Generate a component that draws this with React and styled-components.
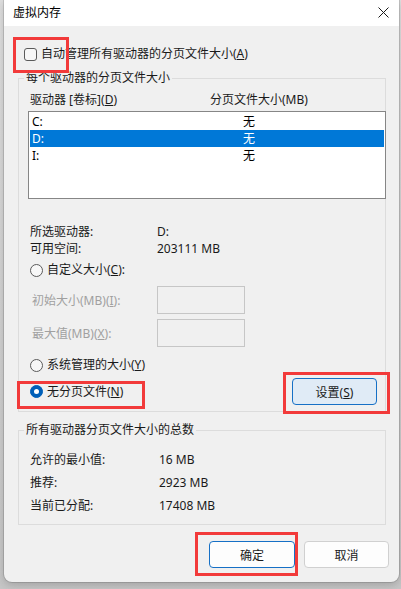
import React from 'react'
import styled, { createGlobalStyle } from 'styled-components'

const GlobalStyle = createGlobalStyle`
  html, body { margin: 0; padding: 0; }
  body {
    background: #d2d2d2;
    font-family: "Noto Sans", "Noto Sans CJK SC", "Microsoft YaHei UI", sans-serif;
    font-size: 12px;
    color: #1a1a1a;
  }
  * { box-sizing: border-box; }
`

const Page = styled.div`
  position: relative;
  width: 401px;
  height: 589px;
  overflow: hidden;
  background: linear-gradient(#dedede, #c6c6c6);
`

const Window = styled.div`
  margin-left: 4px;
  width: 395px;
  height: 582px;
  background: #f0f0f0;
  border-radius: 0 0 8px 8px;
  box-shadow: 0 0 0 1px rgba(0, 0, 0, 0.12), 0 3px 8px rgba(0, 0, 0, 0.18);
  display: flex;
  flex-direction: column;
`

const TitleBar = styled.div`
  height: 26px;
  flex: none;
  background: #ffffff;
  display: flex;
  align-items: center;
  justify-content: space-between;
  padding: 0 10px 2px 9px;
  color: #000;
`

const Body = styled.div`
  padding: 0 10px 0 14px;
  display: flex;
  flex-direction: column;
`

const CheckRow = styled.label`
  margin: 20px 0 0 6px;
  height: 16px;
  line-height: 16px;
  display: flex;
  align-items: center;
  gap: 4px;
`

const CheckBox = styled.span`
  width: 13px;
  height: 13px;
  border: 1px solid #5a5a5a;
  border-radius: 3px;
  background: #f7f7f7;
  flex: none;
`

const Group = styled.fieldset`
  margin: ${p => p.$top}px 0 0 0;
  padding: 0;
  width: 368px;
  min-width: 0;
  border: 1px solid #dcdcdc;
`

const Legend = styled.legend`
  margin-left: 5px;
  padding: 0 2px;
  height: 16px;
  line-height: 16px;
`

const GroupInner = styled.div`
  display: flex;
  flex-direction: column;
  padding-bottom: ${p => p.$bottom}px;
`

const Header = styled.div`
  margin-top: 6px;
  padding-left: 11px;
  height: 16px;
  line-height: 16px;
  display: flex;
`

const HeaderCol = styled.span`
  width: 180px;
  flex: none;
`

const ListBox = styled.div`
  margin: 3px 0 0 9px;
  width: 358px;
  height: 88px;
  background: #ffffff;
  border: 1px solid #868686;
  padding: 1px;
`

const ListRow = styled.div`
  height: 17px;
  line-height: 17px;
  padding-left: 2px;
  display: flex;
  background: ${p => (p.$selected ? '#0078d7' : 'transparent')};
  color: ${p => (p.$selected ? '#ffffff' : '#000000')};
`

const DriveCol = styled.span`
  width: 211px;
  flex: none;
`

const InfoRow = styled.div`
  margin-top: ${p => p.$top}px;
  padding-left: 11px;
  height: 16px;
  line-height: 16px;
  display: flex;
`

const InfoLabel = styled.span`
  width: ${p => p.$width}px;
  flex: none;
`

const RadioRow = styled.div`
  margin-top: ${p => p.$top}px;
  padding: 0 8px 0 11px;
  height: ${p => p.$height || 16}px;
  display: flex;
  align-items: center;
  justify-content: space-between;
`

const RadioLabel = styled.label`
  display: flex;
  align-items: center;
  gap: 4px;
  line-height: 16px;
`

const Radio = styled.span`
  width: 13px;
  height: 13px;
  border-radius: 50%;
  flex: none;
  display: flex;
  align-items: center;
  justify-content: center;
  border: 1px solid ${p => (p.$checked ? '#005fb8' : '#5a5a5a')};
  background: ${p => (p.$checked ? '#005fb8' : '#f7f7f7')};
  &::after {
    content: '';
    display: ${p => (p.$checked ? 'block' : 'none')};
    width: 5px;
    height: 5px;
    border-radius: 50%;
    background: #ffffff;
  }
`

const FieldRow = styled.div`
  margin-top: ${p => p.$top}px;
  padding-left: 13px;
  height: 28px;
  display: flex;
  align-items: center;
  color: #a0a0a0;
`

const FieldLabel = styled.span`
  width: 125px;
  flex: none;
`

const SizeInput = styled.input`
  width: 88px;
  height: 28px;
  border: 1px solid #c6c6c6;
  background: #f0f0f0;
  margin: 0;
  padding: 0;
`

const Button = styled.button`
  width: ${p => p.$width}px;
  height: 27px;
  margin: 0;
  padding: 0;
  border-radius: 4px;
  font-family: inherit;
  font-size: 12px;
  color: #1a1a1a;
  background: ${p => (p.$hover ? '#e0ebf6' : '#fdfdfd')};
  border: 1px solid ${p => (p.$accent ? '#1670c6' : '#d0d0d0')};
`

const ButtonRow = styled.div`
  margin-top: 16px;
  display: flex;
  justify-content: flex-end;
  gap: 9px;
`

const Mark = styled.div`
  position: absolute;
  left: ${p => p.$x}px;
  top: ${p => p.$y}px;
  width: ${p => p.$w}px;
  height: ${p => p.$h}px;
  border: 3px solid #f23a3a;
  pointer-events: none;
`

const CloseIcon = () => (
  <svg width="11" height="11" viewBox="0 0 11 11">
    <path d="M0.5 0.5 L10.5 10.5 M10.5 0.5 L0.5 10.5" stroke="#1a1a1a" strokeWidth="1" fill="none" />
  </svg>
)

const drives = [
  { name: 'C:', size: '无' },
  { name: 'D:', size: '无', selected: true },
  { name: 'I:', size: '无' },
]

const App = () => {
  return (
    <>
      <GlobalStyle />
      <Page>
        <Window>
          <TitleBar>
            <span>虚拟内存</span>
            <CloseIcon />
          </TitleBar>
          <Body>
            <CheckRow>
              <CheckBox />
              <span>自动管理所有驱动器的分页文件大小(<u>A</u>)</span>
            </CheckRow>

            <Group $top={8}>
              <Legend>每个驱动器的分页文件大小</Legend>
              <GroupInner $bottom={6}>
                <Header>
                  <HeaderCol>驱动器 [卷标](<u>D</u>)</HeaderCol>
                  <span>分页文件大小(MB)</span>
                </Header>
                <ListBox>
                  {drives.map(d => (
                    <ListRow key={d.name} $selected={d.selected}>
                      <DriveCol>{d.name}</DriveCol>
                      <span>{d.size}</span>
                    </ListRow>
                  ))}
                </ListBox>
                <InfoRow $top={25}>
                  <InfoLabel $width={127}>所选驱动器:</InfoLabel>
                  <span>D:</span>
                </InfoRow>
                <InfoRow $top={1}>
                  <InfoLabel $width={127}>可用空间:</InfoLabel>
                  <span>203111 MB</span>
                </InfoRow>
                <RadioRow $top={5}>
                  <RadioLabel>
                    <Radio />
                    <span>自定义大小(<u>C</u>):</span>
                  </RadioLabel>
                </RadioRow>
                <FieldRow $top={8}>
                  <FieldLabel>初始大小(MB)(<u>I</u>):</FieldLabel>
                  <SizeInput disabled />
                </FieldRow>
                <FieldRow $top={5}>
                  <FieldLabel>最大值(MB)(<u>X</u>):</FieldLabel>
                  <SizeInput disabled />
                </FieldRow>
                <RadioRow $top={10}>
                  <RadioLabel>
                    <Radio />
                    <span>系统管理的大小(<u>Y</u>)</span>
                  </RadioLabel>
                </RadioRow>
                <RadioRow $top={5} $height={27}>
                  <RadioLabel>
                    <Radio $checked />
                    <span>无分页文件(<u>N</u>)</span>
                  </RadioLabel>
                  <Button $width={85} $hover $accent>设置(<u>S</u>)</Button>
                </RadioRow>
              </GroupInner>
            </Group>

            <Group $top={10}>
              <Legend>所有驱动器分页文件大小的总数</Legend>
              <GroupInner $bottom={10}>
                <InfoRow $top={14}>
                  <InfoLabel $width={129}>允许的最小值:</InfoLabel>
                  <span>16 MB</span>
                </InfoRow>
                <InfoRow $top={7}>
                  <InfoLabel $width={129}>推荐:</InfoLabel>
                  <span>2923 MB</span>
                </InfoRow>
                <InfoRow $top={7}>
                  <InfoLabel $width={129}>当前已分配:</InfoLabel>
                  <span>17408 MB</span>
                </InfoRow>
              </GroupInner>
            </Group>

            <ButtonRow>
              <Button $width={86} $accent>确定</Button>
              <Button $width={85}>取消</Button>
            </ButtonRow>
          </Body>
        </Window>

        <Mark $x={13} $y={37} $w={56} $h={36} />
        <Mark $x={17} $y={381} $w={128} $h={28} />
        <Mark $x={283} $y={372} $w={107} $h={42} />
        <Mark $x={195} $y={532} $w={103} $h={44} />
      </Page>
    </>
  )
}

export default App
